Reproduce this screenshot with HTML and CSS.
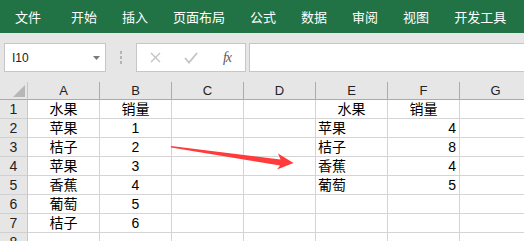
FILE: index.html
```html
<!DOCTYPE html>
<html lang="zh-CN">
<head>
    <meta charset="UTF-8">
    <meta name="viewport" content="width=device-width, initial-scale=1.0">
    <title>水果销量</title>
    <link rel="stylesheet" href="styles.css">
</head>
<body>

    <div class="ribbon">
        <span class="tab first">文件</span>
        <span class="tab">开始</span>
        <span class="tab">插入</span>
        <span class="tab">页面布局</span>
        <span class="tab">公式</span>
        <span class="tab">数据</span>
        <span class="tab">审阅</span>
        <span class="tab">视图</span>
        <span class="tab">开发工具</span>
    </div>

    <div class="formula-bar">
        <div class="name-box">
            <span>I10</span>
            <svg width="7" height="4" viewBox="0 0 7 4"><polygon points="0,0 7,0 3.5,4" fill="#7a7a7a"/></svg>
        </div>
        <div class="dots"><i></i><i></i><i></i></div>
        <div class="fx-box">
            <span class="fx-btn">
                <svg width="11" height="11" viewBox="0 0 11 11"><path d="M1 1 L10 10 M10 1 L1 10" stroke="#c4c4c4" stroke-width="1.4" fill="none"/></svg>
            </span>
            <span class="fx-btn">
                <svg width="14" height="12" viewBox="0 0 14 12"><path d="M1 6 L5 10.5 L13 1" stroke="#c4c4c4" stroke-width="1.8" fill="none"/></svg>
            </span>
            <span class="fx-btn fx">fx</span>
        </div>
        <div class="formula-input"></div>
    </div>

    <div class="sheet">
        <div class="hd corner">
            <svg width="28" height="18" viewBox="0 0 28 18"><polygon points="25,3 25,15 13,15" fill="#b7b7b7"/></svg>
        </div>
        <div class="hd">A</div>
        <div class="hd">B</div>
        <div class="hd">C</div>
        <div class="hd">D</div>
        <div class="hd">E</div>
        <div class="hd">F</div>
        <div class="hd">G</div>

        <div class="rh">1</div>
        <div class="cell c">水果</div>
        <div class="cell c">销量</div>
        <div class="cell"></div>
        <div class="cell"></div>
        <div class="cell c">水果</div>
        <div class="cell c">销量</div>
        <div class="cell"></div>

        <div class="rh">2</div>
        <div class="cell c">苹果</div>
        <div class="cell c">1</div>
        <div class="cell"></div>
        <div class="cell"></div>
        <div class="cell l">苹果</div>
        <div class="cell r">4</div>
        <div class="cell"></div>

        <div class="rh">3</div>
        <div class="cell c">桔子</div>
        <div class="cell c">2</div>
        <div class="cell"></div>
        <div class="cell"></div>
        <div class="cell l">桔子</div>
        <div class="cell r">8</div>
        <div class="cell"></div>

        <div class="rh">4</div>
        <div class="cell c">苹果</div>
        <div class="cell c">3</div>
        <div class="cell"></div>
        <div class="cell"></div>
        <div class="cell l">香蕉</div>
        <div class="cell r">4</div>
        <div class="cell"></div>

        <div class="rh">5</div>
        <div class="cell c">香蕉</div>
        <div class="cell c">4</div>
        <div class="cell"></div>
        <div class="cell"></div>
        <div class="cell l">葡萄</div>
        <div class="cell r">5</div>
        <div class="cell"></div>

        <div class="rh">6</div>
        <div class="cell c">葡萄</div>
        <div class="cell c">5</div>
        <div class="cell"></div>
        <div class="cell"></div>
        <div class="cell"></div>
        <div class="cell"></div>
        <div class="cell"></div>

        <div class="rh">7</div>
        <div class="cell c">桔子</div>
        <div class="cell c">6</div>
        <div class="cell"></div>
        <div class="cell"></div>
        <div class="cell"></div>
        <div class="cell"></div>
        <div class="cell"></div>

        <div class="rh">8</div>
        <div class="cell"></div>
        <div class="cell"></div>
        <div class="cell"></div>
        <div class="cell"></div>
        <div class="cell"></div>
        <div class="cell"></div>
        <div class="cell"></div>
    </div>

    <svg class="arrow" width="524" height="241" viewBox="0 0 524 241">
        <polygon points="171,146 171,147.6 280,165.5 277,169.5 293.5,163 278,153.5 280.5,159.5" fill="#ff3b3b"/>
    </svg>

</body>
</html>
```

FILE: styles.css
```css
body {
    margin: 0;
    width: 524px;
    height: 241px;
    overflow: hidden;
    position: relative;
    background: #fff;
    font-family: "Liberation Sans", "Noto Sans CJK SC", sans-serif;
}
.ribbon {
    height: 33px;
    background: #217346;
    color: #fff;
    display: flex;
    align-items: center;
    gap: 25px;
    padding-left: 15px;
    font-family: "Noto Sans CJK SC", sans-serif;
    font-size: 13px;
}
.ribbon .first {
    margin-right: 5px;
}
.formula-bar {
    height: 49px;
    box-sizing: border-box;
    background: #e6e6e6;
    display: flex;
    align-items: flex-start;
    padding: 10px 0 0 4px;
}
.name-box {
    width: 102px;
    height: 29px;
    box-sizing: border-box;
    background: #fff;
    border: 1px solid #c6c6c6;
    display: flex;
    align-items: center;
    justify-content: space-between;
    padding: 0 5px 0 7px;
    font-size: 12px;
    color: #222;
}
.dots {
    width: 30px;
    height: 29px;
    display: flex;
    flex-direction: column;
    align-items: center;
    justify-content: center;
    gap: 2.5px;
}
.dots i {
    width: 2.5px;
    height: 2.5px;
    background: #b4b4b4;
}
.fx-box {
    width: 110px;
    height: 29px;
    box-sizing: border-box;
    background: #fff;
    border: 1px solid #c6c6c6;
    display: flex;
    align-items: center;
}
.fx-btn {
    width: 36px;
    display: flex;
    justify-content: center;
    align-items: center;
}
.fx {
    font-family: "Liberation Serif", serif;
    font-style: italic;
    font-size: 14px;
    color: #5a5a5a;
    letter-spacing: -1px;
}
.formula-input {
    flex: 1;
    height: 29px;
    margin-left: 3px;
    box-sizing: border-box;
    background: #fff;
    border: 1px solid #c6c6c6;
    border-right: none;
}
.sheet {
    display: grid;
    grid-template-columns: 28px repeat(7, 72px);
    grid-template-rows: 18px repeat(8, 19px);
}
.sheet > div {
    box-sizing: border-box;
    white-space: nowrap;
    overflow: hidden;
}
.hd {
    background: #e6e6e6;
    border-right: 1px solid #ababab;
    border-bottom: 1px solid #ababab;
    text-align: center;
    font-size: 13px;
    line-height: 18px;
    color: #222;
}
.corner {
    border-right-color: #c6c6c6;
}
.corner svg {
    display: block;
}
.rh {
    background: #e6e6e6;
    border-right: 1px solid #c6c6c6;
    border-bottom: 1px solid #d0d0d0;
    text-align: center;
    font-size: 14px;
    line-height: 19px;
    color: #222;
}
.cell {
    border-right: 1px solid #d4d4d4;
    border-bottom: 1px solid #d4d4d4;
    font-size: 14px;
    line-height: 19px;
    padding: 0 3px;
    color: #000;
}
.cell.c {
    text-align: center;
}
.cell.l {
    text-align: left;
    padding-left: 2px;
}
.cell.r {
    text-align: right;
}
.arrow {
    position: absolute;
    left: 0;
    top: 0;
    pointer-events: none;
}
```
